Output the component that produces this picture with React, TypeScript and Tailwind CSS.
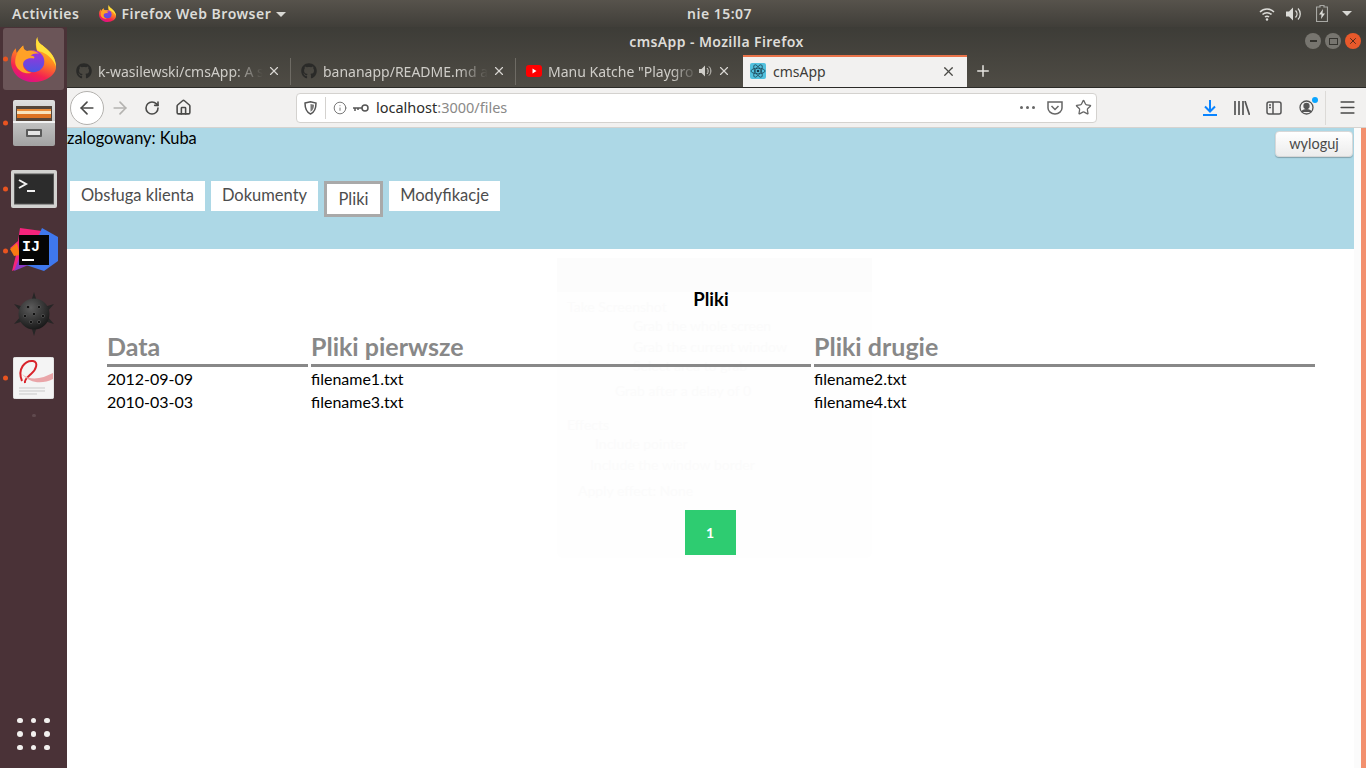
import { ArrowLeft, ArrowRight, Home, Info, Menu, Plus, RotateCw, Star, X } from 'lucide-react';
import { FaGithub } from 'react-icons/fa';

const chromeFont = "font-['Noto_Sans','Open_Sans',sans-serif]";

const Firefox = ({ size }: { size: number }) => (
  <svg width={size} height={size} viewBox="0 0 48 48">
    <defs>
      <linearGradient id={`ffBody${size}`} x1="0.75" y1="0" x2="0.35" y2="1">
        <stop offset="0" stopColor="#ffd02f" />
        <stop offset="0.45" stopColor="#ff8a1f" />
        <stop offset="0.78" stopColor="#f5244f" />
        <stop offset="1" stopColor="#d9108c" />
      </linearGradient>
      <linearGradient id={`ffGlobe${size}`} x1="0.5" y1="0" x2="0.5" y2="1">
        <stop offset="0" stopColor="#a92fd6" />
        <stop offset="1" stopColor="#4a55e4" />
      </linearGradient>
    </defs>
    <path
      d="M28 0c0 5 3 7 7 10 8 6 13 13 13 22 0 8-10 16-24 16C11 48 0 39 0 26c0-6 2-11 5-14l1 5c2-3 5-6 7-8 0 3 1 5 4 6 4-1 8-1 11 1-2-5-2-11 0-16z"
      fill={`url(#ffBody${size})`}
    />
    <path d="M28 0c0 5 3 7 7 10 8 6 13 13 13 22-2-7-8-13-15-16-3-1-5-2-5-2-1-5-2-9 0-14z" fill="#ffe03c" />
    <circle cx="24" cy="26" r="11.500" fill={`url(#ffGlobe${size})`} />
    <path d="M13 9c0 3 1 5 4 6 5-1 10 0 13 3-4-1-7 0-9 2 4 0 5 2 3 3-5-1-10 1-11 5-1 5 3 9 9 10-6 2-14-1-17-8-2-7 2-16 8-21z" fill="#ffa126" />
  </svg>
);

const FileCabinet = () => (
  <svg width="42" height="46" viewBox="0 0 42 46">
    <defs>
      <linearGradient id="cab" x1="0" y1="0" x2="0" y2="1">
        <stop offset="0" stopColor="#e0e0e0" />
        <stop offset="1" stopColor="#a2a2a2" />
      </linearGradient>
    </defs>
    <rect x="0" y="0" width="42" height="46" rx="2" fill="url(#cab)" />
    <rect x="3" y="6" width="36" height="15" fill="#54453a" />
    <rect x="4" y="9" width="34" height="2" fill="#e98b3a" />
    <rect x="4" y="11" width="34" height="3" fill="#f7e3bd" />
    <rect x="4" y="14" width="34" height="4" fill="#dd7322" />
    <rect x="0" y="21" width="42" height="2" fill="#f2f2f2" />
    <rect x="13" y="29" width="16" height="8" rx="1" fill="#5a5a5a" />
    <rect x="15" y="31" width="12" height="4" fill="#e5e5e5" />
  </svg>
);

const Terminal = () => (
  <svg width="46" height="38" viewBox="0 0 46 38">
    <rect x="0" y="0" width="46" height="38" rx="2" fill="#d2d2d0" />
    <rect x="3.500" y="4" width="39" height="30" fill="#2c2c2c" stroke="#555" />
    <path d="M8 10l7 4-7 4" fill="none" stroke="#f2f2f2" strokeWidth="2" />
    <rect x="16" y="20" width="8" height="2" fill="#f2f2f2" />
  </svg>
);

const Intellij = () => (
  <svg width="48" height="48" viewBox="0 0 48 48">
    <path d="M10 1l22 3 4 26-34 14 5-20-7-3 8-7z" fill="#f5247c" />
    <path d="M0 22l7-6 3 12-6 1z" fill="#f97a12" />
    <path d="M32 1l16 9v24l-14 10-18-6z" fill="#3f78ee" />
    <path d="M4 44l12-30 12 20z" fill="#8a3bc8" />
    <rect x="9" y="8" width="30" height="30" fill="#050505" />
    <text x="12" y="24" fill="#fff" fontFamily="Liberation Mono, monospace" fontWeight="700" fontSize="15">IJ</text>
    <rect x="12" y="32" width="12" height="2" fill="#fff" />
  </svg>
);

const Mine = () => (
  <svg width="40" height="44" viewBox="0 0 40 44">
    <defs>
      <radialGradient id="mine" cx="0.4" cy="0.3" r="0.8">
        <stop offset="0" stopColor="#5c5c5c" />
        <stop offset="1" stopColor="#111" />
      </radialGradient>
    </defs>
    <path d="M20 0l3 10h-6zM20 44l-3-10h6zM0 12l10 3-3 5zM40 12l-10 3 3 5zM0 32l10-3-3-5zM40 32l-10-3 3-5z" fill="#262626" />
    <circle cx="20" cy="22" r="15.500" fill="url(#mine)" />
    {[[14, 15], [25, 15], [20, 22], [11, 24], [29, 24], [17, 30], [25, 30]].map(([x, y]) => (
      <circle key={`${x}-${y}`} cx={x} cy={y} r="1.600" fill="#0c0c0c" stroke="#6d6d6d" strokeWidth="0.500" />
    ))}
  </svg>
);

const PdfViewer = () => (
  <svg width="41" height="42" viewBox="0 0 41 42">
    <rect width="41" height="42" rx="3" fill="#f4f4f4" stroke="#d5d5d5" />
    <path d="M9 24C4 12 12 3 20 4c6 1 3 9-2 13-3 3-7 5-6 9" fill="none" stroke="#d8232a" strokeWidth="2" />
    <path d="M9 17c9 8 21 4 31-1v6c-10 5-23 5-31-5z" fill="#e9a5a8" />
    <path d="M6 31h26M6 34h26M6 37h18" stroke="#c9c9c9" strokeWidth="1" />
  </svg>
);

const dockItems = [
  { icon: <Firefox size={45} />, running: true, active: true, h: 62 },
  { icon: <FileCabinet />, running: true, active: false, h: 66 },
  { icon: <Terminal />, running: true, active: false, h: 65 },
  { icon: <Intellij />, running: true, active: false, h: 60 },
  { icon: <Mine />, running: false, active: false, h: 66 },
  { icon: <PdfViewer />, running: true, active: false, h: 62 },
];

const Dock = () => (
  <aside className="flex w-[67px] shrink-0 flex-col items-center bg-[#4a3237] pt-px">
    {dockItems.map((item, i) => (
      <div
        key={i}
        className={`relative flex w-[61px] items-center justify-center rounded-[3px] ${item.active ? 'bg-[#6b5558]' : ''}`}
        style={{ height: item.h }}
      >
        {item.running && <span className="absolute left-0 top-1/2 h-[5px] w-[5px] -translate-y-1/2 rounded-full bg-[#e95420]" />}
        {item.icon}
      </div>
    ))}
    <span className="mt-[5px] h-[3px] w-[4px] rounded-full bg-[#5f4a4e]" />
    <div className="mb-[18px] mt-auto grid grid-cols-3 gap-[8px]">
      {Array.from({ length: 9 }).map((_, i) => (
        <span key={i} className="h-[5.500px] w-[5.500px] rounded-full bg-[#f2f0ee]" />
      ))}
    </div>
  </aside>
);

const TopBar = () => (
  <header className={`flex h-[27px] items-center bg-gradient-to-b from-[#57534c] to-[#403e39] pl-[12px] pr-[14px] text-[14px] font-semibold tracking-[0.5px] text-[#dcdcd8] ${chromeFont}`}>
    <span>Activities</span>
    <span className="ml-[20px] flex items-center gap-[5px]">
      <Firefox size={17} />
      Firefox Web Browser
      <span className="mt-px h-0 w-0 border-x-[5px] border-t-[5px] border-x-transparent border-t-[#d8d8d4]" />
    </span>
    <span className="absolute left-[687px]">nie 15:07</span>
    <span className="ml-auto flex items-center gap-[11px]">
      <svg width="16" height="14" viewBox="0 0 16 14" fill="none" stroke="#dcdcd8" strokeWidth="1.500">
        <path d="M1 5c4-4 10-4 14 0M3.500 7.500c2.500-2.500 6.500-2.500 9 0M6 10c1-1 3-1 4 0" />
        <circle cx="8" cy="12.500" r="1.200" fill="#dcdcd8" stroke="none" />
      </svg>
      <svg width="16" height="14" viewBox="0 0 16 14" fill="#dcdcd8">
        <path d="M0 4.500h3l4-4v13l-4-4H0z" />
        <path d="M9.500 3.500c2 2 2 5 0 7M12 1.500c3 3 3 8 0 11" fill="none" stroke="#dcdcd8" strokeWidth="1.300" />
      </svg>
      <svg width="12" height="17" viewBox="0 0 12 17" className="ml-[3px]">
        <path d="M4 .5h4v1.500h3.500v14.500h-11V2H4z" fill="none" stroke="#a8a8a4" strokeWidth="1.200" />
        <path d="M7 4L3 9.500h2.500L5 14l4-5.500H6.500z" fill="#dcdcd8" />
      </svg>
      <span className="ml-[3px] h-0 w-0 border-x-[5px] border-t-[5px] border-x-transparent border-t-[#d8d8d4]" />
    </span>
  </header>
);

const tabs = [
  { title: 'k-wasilewski/cmsApp: A s', icon: 'gh', box: 'w-[224px] pl-[9px] pr-[10px]' },
  { title: 'bananapp/README.md a', icon: 'gh', box: 'w-[225px] pl-[10px] pr-[10px]' },
  { title: 'Manu Katche "Playgro', icon: 'yt', box: 'w-[227px] pl-[10px] pr-[12px]' },
];

const TabStrip = () => (
  <div className="flex h-[32px] items-stretch text-[14px]">
    {tabs.map((tab) => (
      <div key={tab.title} className={`flex items-center text-[#cfcdc8] ${tab.box}`}>
        {tab.icon === 'gh' ? (
          <FaGithub className="shrink-0 text-[16px] text-[#2a2a28]" />
        ) : (
          <svg width="16" height="12" viewBox="0 0 16 12" className="shrink-0">
            <rect width="16" height="12" rx="3" fill="#f00" />
            <path d="M6.500 3.500l4 2.500-4 2.500z" fill="#fff" />
          </svg>
        )}
        <span className="ml-[6px] min-w-0 flex-1 whitespace-nowrap [mask-image:linear-gradient(to_right,black_82%,transparent)]">{tab.title}</span>
        {tab.icon === 'yt' && (
          <svg width="14" height="12" viewBox="0 0 14 12" className="ml-[1px] shrink-0" fill="#cfcdc8">
            <path d="M0 4h2.500L6 .5v11L2.500 8H0z" />
            <path d="M8 3c1.500 1.500 1.500 4.500 0 6M10 1.500c2.500 2.500 2.500 6.500 0 9" fill="none" stroke="#cfcdc8" />
          </svg>
        )}
        <X size={14} strokeWidth={2} className="ml-[4px] shrink-0 text-[#d8d6d2]" />
        {tab.icon === 'gh' && <span className="ml-[9px] -mr-[10px] h-[27px] w-px shrink-0 bg-[#6e6b64]" />}
      </div>
    ))}
    <div className="flex w-[224px] items-center border-t-2 border-t-[#e9734a] bg-[#f2f1f0] pb-[2px] pl-[7px] pr-[11px] text-[#3d3c38]">
      <svg width="16" height="16" viewBox="0 0 16 16" className="shrink-0">
        <rect width="16" height="16" rx="2" fill="#53c1de" />
        <g fill="none" stroke="#173a4a" strokeWidth="0.700">
          <ellipse cx="8" cy="8" rx="7" ry="2.800" />
          <ellipse cx="8" cy="8" rx="7" ry="2.800" transform="rotate(60 8 8)" />
          <ellipse cx="8" cy="8" rx="7" ry="2.800" transform="rotate(120 8 8)" />
        </g>
        <circle cx="8" cy="8" r="1.300" fill="#173a4a" />
      </svg>
      <span className="ml-[7px] flex-1">cmsApp</span>
      <X size={15} strokeWidth={2} className="text-[#4a4945]" />
    </div>
    <Plus size={18} strokeWidth={2} className="ml-[7px] self-center text-[#e6e4e0]" />
  </div>
);

const NavBar = () => (
  <div className="flex h-[40px] items-center border-b border-[#d5d3d0] bg-[#f2f1f0] pl-[3px] text-[#4a4a48]">
    <div className="flex h-[34px] w-[34px] items-center justify-center rounded-full border border-[#b3b1ae] bg-white">
      <ArrowLeft size={20} strokeWidth={2} />
    </div>
    <ArrowRight size={20} strokeWidth={2} className="ml-[6px] text-[#b4b3b0]" />
    <RotateCw size={16} strokeWidth={2.400} className="ml-[14px]" />
    <Home size={17} strokeWidth={2.200} className="ml-[15px]" />
    <div className="ml-[104px] flex h-[30px] w-[801px] items-center rounded-[4px] border border-[#d4d2cf] bg-white pl-[7px] pr-[4px]">
      <svg width="13" height="14" viewBox="0 0 13 14">
        <path d="M1 2l5.500-1.200L12 2c0 5-1 9-5.500 11C2 11 1 7 1 2z" fill="none" stroke="#555" strokeWidth="1.500" />
        <path d="M6.500 3l3.500.800c0 3-.800 5.500-3.500 7z" fill="#777" />
      </svg>
      <span className="ml-[8px] h-[22px] w-px bg-[#d4d2cf]" />
      <Info size={14} strokeWidth={1.500} className="ml-[7px] text-[#666]" />
      <svg width="17" height="8" viewBox="0 0 17 8" className="ml-[5px]" fill="none" stroke="#555" strokeWidth="1.500">
        <circle cx="13" cy="4" r="3" />
        <path d="M10 4H1M3 4v3M6 4v2" />
      </svg>
      <span className="ml-[7px] text-[14.500px] text-[#8a8987]">
        <span className="text-[#2c2c2a]">localhost</span>:3000/files
      </span>
      <span className="ml-auto flex items-center gap-[3px]">
        {[0, 1, 2].map((d) => (
          <span key={d} className="h-[3px] w-[3px] rounded-full bg-[#666]" />
        ))}
      </span>
      <svg width="16" height="14" viewBox="0 0 16 14" className="ml-[12px]" fill="none" stroke="#666" strokeWidth="1.500">
        <path d="M1 1h14v6c0 3-3 6-7 6s-7-3-7-6z" />
        <path d="M4.500 5L8 8.500 11.500 5" />
      </svg>
      <Star size={17} strokeWidth={1.800} className="ml-[12px] text-[#666]" />
    </div>
    <svg width="14" height="16" viewBox="0 0 14 16" className="ml-[106px]" fill="none" stroke="#0a84ff" strokeWidth="2">
      <path d="M7 0v11M2 6.500L7 11.500l5-5M0 15h14" />
    </svg>
    <svg width="16" height="14" viewBox="0 0 16 14" className="ml-[17px]" fill="none" stroke="#555" strokeWidth="1.700">
      <path d="M1 0v14M5 0v14M9 0v14M11 0l4.500 14" />
    </svg>
    <svg width="16" height="14" viewBox="0 0 16 14" className="ml-[16px]" fill="none" stroke="#555" strokeWidth="1.500">
      <rect x="1" y="1" width="14" height="12" rx="2" />
      <path d="M7 1v12M3 4h2M3 6.500h2" />
    </svg>
    <span className="relative ml-[17px]">
      <svg width="15" height="15" viewBox="0 0 15 15" fill="none" stroke="#555" strokeWidth="1.300">
        <circle cx="7.500" cy="7.500" r="6.500" />
        <circle cx="7.500" cy="6" r="2.500" fill="#555" />
        <path d="M3 12c1-3 8-3 9 0" fill="#555" />
      </svg>
      <span className="absolute -right-[4px] -top-[3px] h-[6px] w-[6px] rounded-full bg-[#0aa5ff]" />
    </span>
    <span className="ml-[11px] h-[34px] w-px bg-[#dcdad7]" />
    <Menu size={19} strokeWidth={2} className="ml-[12px]" />
  </div>
);

const navLinks = [
  { label: 'Obsługa klienta', w: 'w-[135px]' },
  { label: 'Dokumenty', w: 'w-[107px]' },
  { label: 'Pliki', w: 'w-[59px]' },
  { label: 'Modyfikacje', w: 'w-[111px]' },
];

const rows = [
  ['2012-09-09', 'filename1.txt', 'filename2.txt'],
  ['2010-03-03', 'filename3.txt', 'filename4.txt'],
];

const ghostLines = [
  { text: 'Take Screenshot', cls: 'pl-[10px] pt-[5px]' },
  { text: 'Grab the whole screen', cls: 'pl-[76px] pt-[0px]' },
  { text: 'Grab the current window', cls: 'pl-[76px] pt-[2px]' },
  { text: 'Select area to grab', cls: 'pl-[76px] pt-[0px]' },
  { text: 'Grab after a delay of 0', cls: 'pl-[58px] pt-[6px]' },
  { text: 'Effects', cls: 'pl-[10px] pt-[15px]' },
  { text: 'Include pointer', cls: 'pl-[38px] pt-[0px]' },
  { text: 'Include the window border', cls: 'pl-[33px] pt-[2px]' },
  { text: 'Apply effect: None', cls: 'pl-[21px] pt-[7px]' },
];

const Page = () => (
  <main className="relative flex-1 font-['Lato',sans-serif] text-black">
    <section className="h-[121px] bg-[#add8e6]">
      <div className="flex items-start justify-between pr-[1px]">
        <span className="text-[16.400px] leading-[20px]">zalogowany: Kuba</span>
        <button className="mt-[3px] h-[26px] w-[78px] rounded-[4px] border border-[#d8d8d8] bg-gradient-to-b from-white to-[#ececec] pb-px text-[14.500px] text-[#4a4a4a] shadow-[0_1px_1px_rgba(0,0,0,0.25)]">
          wyloguj
        </button>
      </div>
      <nav className="ml-[3px] mt-[24px] flex items-start gap-[6px] text-[16.500px] text-[#4d4d4d]">
        {navLinks.map((link) =>
          link.label === 'Pliki' ? (
            <a key={link.label} className={`flex h-[36px] items-center justify-center border-[3px] border-[#a9a9a9] bg-white ${link.w}`}>
              {link.label}
            </a>
          ) : (
            <a key={link.label} className={`flex h-[30px] items-center justify-center bg-white pb-[2px] ${link.w}`}>
              {link.label}
            </a>
          ),
        )}
      </nav>
    </section>

    {/* faint leftover of the screenshot dialog */}
    <div className="pointer-events-none absolute left-[490px] top-[130px] h-[300px] w-[315px] rounded-[6px] bg-[#fefefe] text-[14px] leading-[19px] text-[#fbfbfb]">
      <div className="h-[34px] bg-[#fcfcfc]" />
      {ghostLines.map((line) => (
        <p key={line.text} className={line.cls}>{line.text}</p>
      ))}
    </div>

    <section className="relative pl-[40px] pr-[39px]">
      <h2 className="pt-[38px] text-center text-[18.500px] font-bold leading-[24px]">Pliki</h2>
      <div className="mt-[17px] grid grid-cols-[201px_500px_501px] gap-x-[3px]">
        {['Data', 'Pliki pierwsze', 'Pliki drugie'].map((head) => (
          <div key={head} className="border-b-[3px] border-[#888] text-[25px] font-bold leading-[36px] text-[#888]">
            {head}
          </div>
        ))}
      </div>
      <div className="grid grid-cols-[201px_500px_501px] gap-x-[3px] text-[16px] leading-[23px]">
        {rows.flat().map((cell) => (
          <div key={cell}>{cell}</div>
        ))}
      </div>
      <div className="mr-[2px] mt-[97px] flex justify-center">
        <button className="flex h-[45px] w-[51px] items-center justify-center bg-[#2ecc71] text-[14px] font-bold text-white">1</button>
      </div>
    </section>
  </main>
);

export default function App() {
  return (
    <div className={`relative flex h-[768px] w-[1366px] flex-col overflow-hidden bg-white ${chromeFont}`}>
      <TopBar />
      <div className="flex min-h-0 flex-1">
        <Dock />
        <div className="flex min-w-0 flex-1 flex-col">
          <div className="bg-gradient-to-b from-[#3d3c37] to-[#4f4c45]">
            <div className="flex h-[28px] items-center text-[14px] font-semibold tracking-[0.4px] text-[#dedcd8]">
              <span className="flex-1 pl-[61px] text-center">cmsApp - Mozilla Firefox</span>
              <span className="mr-[5px] flex gap-[4px]">
                <span className="flex h-[16px] w-[16px] items-center justify-center rounded-full bg-[#77756f]">
                  <span className="h-[1.500px] w-[7px] bg-[#35342f]" />
                </span>
                <span className="flex h-[16px] w-[16px] items-center justify-center rounded-full bg-[#77756f]">
                  <span className="h-[7px] w-[9px] border border-[#35342f]" />
                </span>
                <span className="flex h-[16px] w-[16px] items-center justify-center rounded-full bg-[#e9592b]">
                  <X size={10} strokeWidth={2} className="text-[#3a2218]" />
                </span>
              </span>
            </div>
            <div className="border-b border-[#2b2a27]">
              <TabStrip />
            </div>
          </div>
          <NavBar />
          <div className="flex min-h-0 flex-1">
            <Page />
            <div className="flex w-[12px] shrink-0 justify-end bg-[#fbfbfb]">
              <div className="w-[5px] bg-[#f2906e]" />
            </div>
          </div>
        </div>
      </div>
    </div>
  );
}
